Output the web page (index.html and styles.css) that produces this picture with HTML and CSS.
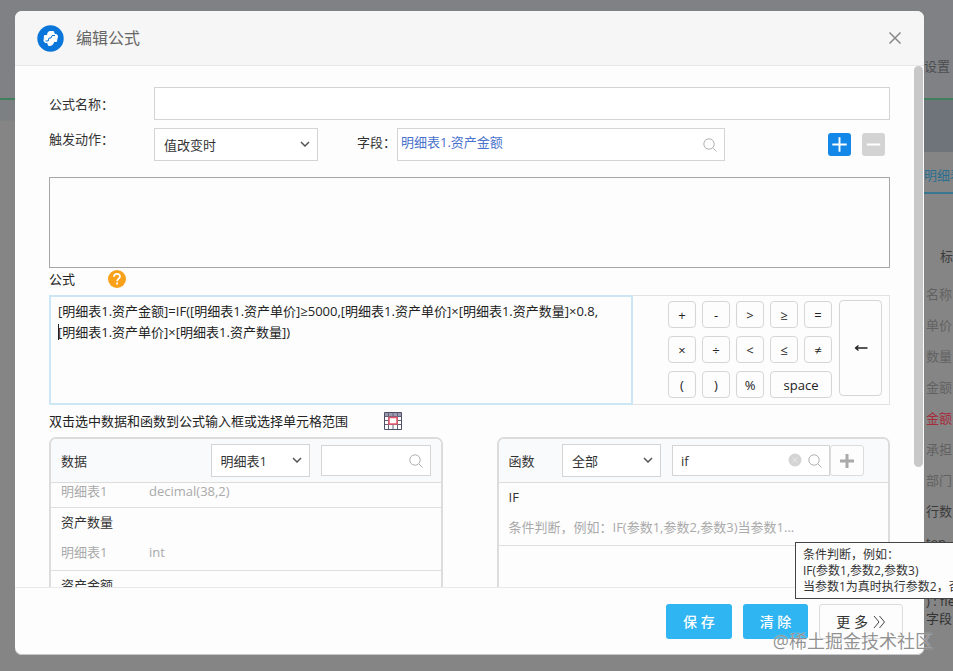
FILE: index.html
```html
<!DOCTYPE html>
<html lang="zh-CN">
    <head>
        <title>编辑公式</title>

        <meta charset="utf-8">

        <link rel="stylesheet" href="styles.css">
    </head>

    <body>
        <div class="page">
            <div class="page-top"><span>设置</span></div>
            <div class="page-bar"></div>
            <div class="page-tabs"><span>明细表</span></div>
            <div class="page-head"><span>标</span></div>
            <ul class="page-list">
                <li>名称</li>
                <li>单价</li>
                <li>数量</li>
                <li>金额</li>
                <li class="active">金额</li>
                <li>承担</li>
                <li>部门</li>
                <li class="dark">行数</li>
                <li class="dark">tep</li>
            </ul>
            <div class="page-note">) : fie<br>字段</div>
        </div>

        <div class="modal" role="dialog" aria-labelledby="title">
            <div class="modal-header">
                <svg class="logo" viewBox="0 0 27 27">
                    <circle cx="13.500" cy="13.500" r="13.200" fill="#0b76d9"/>
                    <path fill="#fff" stroke="#fff" stroke-linejoin="round" d="M12.500 6.500h4l1 3h2l1 1.500-1 5.500h-2.500l-1.500 3-2 1h-2l-1-3H8l-1-1.500.5-5.500h3l.5-3z"/>
                    <path fill="none" stroke="#0b76d9" d="M18 10.500h-3l-1 2.500h-2l-.8 3H8.500"/>
                </svg>
                <h1 id="title">编辑公式</h1>
                <button class="close" aria-label="关闭">
                    <svg width="14" height="14" viewBox="0 0 14 14"><path d="M1.500 1.500l11 11M12.500 1.500l-11 11"/></svg>
                </button>
            </div>

            <div class="modal-body">
                <div class="row">
                    <label class="label" for="name">公式名称：</label>
                    <input class="input" id="name" type="text">
                </div>
                <div class="row row-action">
                    <label class="label" for="action">触发动作：</label>
                    <span class="select select-action">
                        <select id="action"><option>值改变时</option></select>
                        <svg width="10" height="6" viewBox="0 0 10 6"><path d="M1 1l4 4 4-4"/></svg>
                    </span>
                    <label class="label label-field" for="field">字段：</label>
                    <span class="search search-field">
                        <input class="input" id="field" type="text" value="明细表1.资产金额">
                        <svg class="glass" width="14" height="14" viewBox="0 0 14 14"><circle cx="6" cy="6" r="5.200"/><path d="M9.700 9.700l3.800 3.800"/></svg>
                    </span>
                    <span class="tools">
                        <button class="tool add" aria-label="添加"><svg width="23" height="23" viewBox="0 0 24 24"><path d="M4.500 12h15M12 4.500v15"/></svg></button>
                        <button class="tool remove" aria-label="删除"><svg width="23" height="23" viewBox="0 0 24 24"><path d="M5 12h14"/></svg></button>
                    </span>
                </div>

                <textarea class="actions" aria-label="动作"></textarea>

                <div class="caption">
                    <label for="formula">公式</label>
                    <svg class="help" width="18" height="18" viewBox="0 0 18 18">
                        <circle cx="9" cy="9" r="9" fill="#f9a11b"/>
                        <path fill="none" stroke="#fff" stroke-width="1.800" d="M6 6.800C6 3 12 3 12 6.600c0 2-2.900 2.200-2.900 4.700M9.100 12.600v2"/>
                    </svg>
                </div>

                <div class="editor">
                    <div class="formula">
                        <textarea id="formula" spellcheck="false">[明细表1.资产金额]=IF([明细表1.资产单价]≥5000,[明细表1.资产单价]×[明细表1.资产数量]×0.8,
[明细表1.资产单价]×[明细表1.资产数量])</textarea>
                        <span class="caret"></span>
                    </div>
                    <div class="keypad">
                        <button>+</button>
                        <button>-</button>
                        <button>&gt;</button>
                        <button>≥</button>
                        <button>=</button>
                        <button class="back" aria-label="退格"><svg width="14" height="8" viewBox="0 0 14 8"><path d="M13.500 4H2M4.500 1.500L1.500 4l3 2.500"/></svg></button>
                        <button>×</button>
                        <button>÷</button>
                        <button>&lt;</button>
                        <button>≤</button>
                        <button>≠</button>
                        <button>(</button>
                        <button>)</button>
                        <button>%</button>
                        <button class="space">space</button>
                    </div>
                </div>

                <div class="hint">
                    <span>双击选中数据和函数到公式输入框或选择单元格范围</span>
                    <svg width="18" height="18" viewBox="0 0 18 18">
                        <path fill="#fff" stroke="#4d4d66" d="M.5.5h17v17H.5z"/>
                        <path fill="#9a9aae" d="M1 1h16v3H1z"/>
                        <path fill="none" stroke="#63637e" d="M1 4.500h16M1 8.500h16M1 12.500h16M4.500 1v16M9 1v16M13.500 1v16"/>
                        <path fill="#fff" stroke="#e8586a" stroke-width="1.500" d="M5 5.500h8v6.500H5z"/>
                    </svg>
                </div>

                <div class="panels">
                    <section class="panel">
                        <div class="panel-header">
                            <label class="panel-title" for="table">数据</label>
                            <span class="select">
                                <select id="table"><option>明细表1</option></select>
                                <svg width="10" height="6" viewBox="0 0 10 6"><path d="M1 1l4 4 4-4"/></svg>
                            </span>
                            <span class="search">
                                <input class="input" type="text" aria-label="搜索数据">
                                <svg class="glass" width="14" height="14" viewBox="0 0 14 14"><circle cx="6" cy="6" r="5.200"/><path d="M9.700 9.700l3.800 3.800"/></svg>
                            </span>
                        </div>
                        <ul class="list">
                            <li class="scrolled"><p class="meta"><span>明细表1</span><span>decimal(38,2)</span></p></li>
                            <li><p>资产数量</p><p class="meta"><span>明细表1</span><span>int</span></p></li>
                            <li><p>资产金额</p></li>
                        </ul>
                    </section>
                    <section class="panel panel-functions">
                        <div class="panel-header">
                            <label class="panel-title" for="kind">函数</label>
                            <span class="select">
                                <select id="kind"><option>全部</option></select>
                                <svg width="10" height="6" viewBox="0 0 10 6"><path d="M1 1l4 4 4-4"/></svg>
                            </span>
                            <span class="search">
                                <input class="input" type="text" value="if" aria-label="搜索函数">
                                <svg class="wipe" width="14" height="14" viewBox="0 0 14 14"><circle cx="7" cy="7" r="6.500" fill="#d4d4d4"/><path stroke="#e6e6e6" d="M4.500 4.500l5 5M9.500 4.500l-5 5"/></svg>
                                <svg class="glass" width="14" height="14" viewBox="0 0 14 14"><circle cx="6" cy="6" r="5.200"/><path d="M9.700 9.700l3.800 3.800"/></svg>
                            </span>
                            <button class="plus" aria-label="新增函数"><svg width="14" height="14" viewBox="0 0 14 14"><path d="M0 7h14M7 0v14"/></svg></button>
                        </div>
                        <ul class="list">
                            <li><p>IF</p><p class="meta">条件判断，例如：IF(参数1,参数2,参数3)当参数1...</p></li>
                        </ul>
                    </section>
                </div>
                <div class="scrollbar"></div>
            </div>

            <div class="modal-footer">
                <button class="btn primary">保 存</button>
                <button class="btn primary">清 除</button>
                <button class="btn more">更 多 <svg width="13" height="14" viewBox="0 0 13 14"><path d="M1 1l5 6-5 6M6.500 1l5 6-5 6"/></svg></button>
            </div>
        </div>

        <div class="tooltip" role="tooltip">条件判断，例如：<br>IF(参数1,参数2,参数3)<br>当参数1为真时执行参数2，否</div>
        <div class="watermark">@稀土掘金技术社区</div>
    </body>
</html>
```
FILE: styles.css
```css
* {
    box-sizing: border-box;
}
body {
    position: relative;
    display: flex;
    height: 100vh;
    margin: 0;
    padding: 11px 29px 16px 15px;
    overflow: hidden;
    background: #858585;
    color: #333;
    font: 13px/20px "Open Sans", "Noto Sans CJK SC", sans-serif;
}
button, input, select, textarea {
    margin: 0;
    font: inherit;
    color: inherit;
}
button {
    padding: 0;
    cursor: pointer;
}
ul, p, h1 {
    margin: 0;
    padding: 0;
    list-style: none;
}
svg {
    display: block;
    flex: none;
}

/* page under the dialog */
.page {
    position: absolute;
    inset: 0;
    display: flex;
    flex-direction: column;
    color: #4c4d4f;
}
.page > * {
    flex: none;
    padding-left: calc(100% - 27px);
    white-space: nowrap;
    overflow: hidden;
}
.page > .page-top {
    height: 100px;
    padding-top: 56px;
    padding-left: calc(100% - 29px);
    background: #808184;
    border-bottom: 2px solid #3f7f5c;
}
.page-bar {
    height: 52px;
    background: linear-gradient(90deg, transparent 50%, #6f747b 50%), linear-gradient(#7d8083 20px, #858585 22px);
}
.page > .page-tabs {
    height: 42px;
    margin-left: calc(100% - 29px);
    padding: 13px 0 0;
    color: #2b6f90;
    border-bottom: 2px solid #3a7591;
}
.page-head {
    height: 85px;
    padding-top: 52px;
    text-align: right;
    color: #3c3c3c;
}
.page-list {
    color: #626262;
}
.page-list li {
    line-height: 31px;
}
.page-list .active {
    color: #a62c3c;
}
.page-list .dark {
    color: #3a3a3a;
}
.page-note {
    padding-top: 35px;
    line-height: 17px;
    color: #333;
}

.modal {
    position: relative;
    display: flex;
    flex: 1;
    flex-direction: column;
    min-width: 0;
    background: #fdfdfd;
    border-radius: 7px;
    box-shadow: inset 0 -1px 0 #c8c8c8;
    overflow: hidden;
}
.modal-header {
    display: flex;
    flex: none;
    align-items: center;
    gap: 12px;
    height: 55px;
    padding: 0 22px;
    background: #f6f6f6;
    border-bottom: 1px solid #e8e8e8;
}
.modal-header h1 {
    flex: 1;
    font-size: 16px;
    font-weight: normal;
    color: #666;
}
.logo {
    width: 27px;
    height: 27px;
}
.close {
    border: 0;
    background: none;
    stroke: #888;
    stroke-width: 1.5;
}
.modal-body {
    position: relative;
    flex: 1;
    min-height: 0;
    padding: 21px 34px 0;
    overflow: hidden;
}
.scrollbar {
    position: absolute;
    top: 0;
    right: 1px;
    width: 9px;
    height: 77%;
    border-radius: 5px;
    background: #c8c8c8;
}

.row {
    display: flex;
    align-items: center;
    margin-bottom: 8px;
}
.label {
    flex: none;
    width: 105px;
}
.input {
    width: 100%;
    min-width: 0;
    height: 33px;
    padding: 0 8px;
    background: #fff;
    border: 1px solid #d4d4d4;
    outline: none;
}
.row-action {
    margin-bottom: 16px;
}
.row-action .label {
    align-self: flex-start;
    line-height: 22px;
}
.row-action .label-field {
    width: 40px;
    margin-left: 39px;
    line-height: 28px;
}
.select {
    position: relative;
    flex: none;
    width: 99px;
}
.select-action {
    width: 164px;
}
.select select {
    width: 100%;
    height: 33px;
    padding: 0 9px;
    appearance: none;
    background: #fff;
    border: 1px solid #d4d4d4;
    border-radius: 0;
}
.select svg {
    position: absolute;
    top: 13px;
    right: 8px;
    fill: none;
    stroke: #555;
    stroke-width: 1.5;
    pointer-events: none;
}
.search {
    position: relative;
    display: flex;
}
.search-field {
    width: 39%;
}
.search-field .input {
    padding: 0 3px 6px;
    color: #4a72cc;
}
.glass {
    position: absolute;
    top: 50%;
    right: 8px;
    margin-top: -7px;
    fill: none;
    stroke: #b0b0b0;
}
.wipe {
    position: absolute;
    top: 50%;
    right: 28px;
    margin-top: -8px;
}
.tools {
    display: flex;
    gap: 11px;
    margin-left: auto;
    padding-right: 5px;
}
.tool {
    border: 0;
    border-radius: 3px;
    stroke: #fff;
    stroke-width: 2;
}
.add {
    background: #1488e8;
}
.remove {
    background: #d3d3d3;
}
.actions {
    display: block;
    width: 100%;
    height: 91px;
    background: #fdfdfd;
    border: 1px solid #a6a6a6;
    resize: none;
}

.caption {
    display: flex;
    align-items: center;
    gap: 33px;
    height: 27px;
    padding-bottom: 5px;
    color: #222;
}
.editor {
    display: flex;
    justify-content: space-between;
    border: 1px solid #e2e2e2;
    border-left: 0;
}
.formula {
    position: relative;
    flex: 1;
    margin: -1px 0;
}
.formula textarea {
    display: block;
    width: 100%;
    height: 110px;
    padding: 4px 7px;
    line-height: 21px;
    color: #222;
    background: #fdfdfd;
    border: 2px solid #cde6f3;
    outline: none;
    resize: none;
    overflow: hidden;
}
.caret {
    position: absolute;
    top: 29px;
    left: 9px;
    width: 1px;
    height: 16px;
    background: #222;
}
.keypad {
    display: grid;
    grid-template-columns: repeat(5, 28px) 44px;
    grid-template-rows: repeat(3, 27px);
    gap: 8px 6px;
    margin-left: 35px;
    padding: 5px 7px 6px 0;
    color: #222;
}
.keypad button {
    background: #fdfdfd;
    border: 1px solid #d6d6d6;
    border-radius: 4px;
}
.keypad .back {
    display: grid;
    place-items: center;
    grid-area: 1 / 6 / 4 / 7;
    margin: -1px 0 2px 1px;
    fill: none;
    stroke: #222;
    stroke-width: 1.3;
}
.keypad .space {
    grid-column: 4 / 6;
}
.hint {
    display: flex;
    align-items: center;
    gap: 36px;
    height: 32px;
    color: #222;
}

.panels {
    display: grid;
    grid-template-columns: 1fr 1fr;
    gap: 54px;
}
.panel {
    height: 240px;
    border: 2px solid #dcdcdc;
    border-radius: 7px;
    overflow: hidden;
}
.panel-header {
    display: flex;
    align-items: center;
    height: 44px;
    padding: 0 10px;
    background: #f8fafc;
    border-bottom: 1px solid #dcdcdc;
}
.panel-title {
    flex: 1;
}
.panel-header .search {
    flex: none;
    width: 110px;
    margin-left: 11px;
}
.panel-functions .search {
    width: 158px;
}
.panel-functions .panel-header {
    padding-right: 24px;
}
.panel-header .input {
    height: 31px;
}
.plus {
    display: grid;
    place-items: center;
    width: 34px;
    height: 31px;
    background: #fdfdfd;
    border: 1px solid #dcdcdc;
    border-radius: 3px;
    stroke: #aaa;
    stroke-width: 3;
}
.list li {
    padding: 4px 10px 8px;
    border-bottom: 1px solid #dedede;
}
.list .scrolled {
    padding-top: 0;
}
.list p + .meta {
    margin-top: 10px;
}
.scrolled .meta {
    line-height: 16px;
}
.meta {
    display: flex;
    color: #aaa;
}
.meta span:first-child {
    width: 88px;
}

.modal-footer {
    display: flex;
    flex: none;
    justify-content: flex-end;
    gap: 11px;
    height: 68px;
    padding: 16px 21px;
    border-top: 1px solid #e8e8e8;
}
.btn {
    height: 35px;
    padding: 0 17px;
    border: 0;
    border-radius: 3px;
    font-size: 14px;
}
.primary {
    color: #fff;
    background: #2eb5f2;
    font-weight: 500;
}
.more {
    display: flex;
    align-items: center;
    gap: 5px;
    padding: 0 16px;
    background: #fdfdfd;
    border: 1px solid #dcdcdc;
}
.more svg {
    fill: none;
    stroke: #444;
}

.tooltip {
    position: absolute;
    top: 542px;
    left: 795px;
    padding: 4px 7px 3px;
    background: #fdfdfd;
    border: 1px solid #444;
    font-size: 12px;
    line-height: 16px;
    white-space: nowrap;
}
.watermark {
    position: absolute;
    right: 20px;
    bottom: 18px;
    font-size: 18px;
    line-height: 24px;
    color: rgba(110, 110, 110, 0.75);
    text-shadow: 0 0 1px #fff;
}
```
